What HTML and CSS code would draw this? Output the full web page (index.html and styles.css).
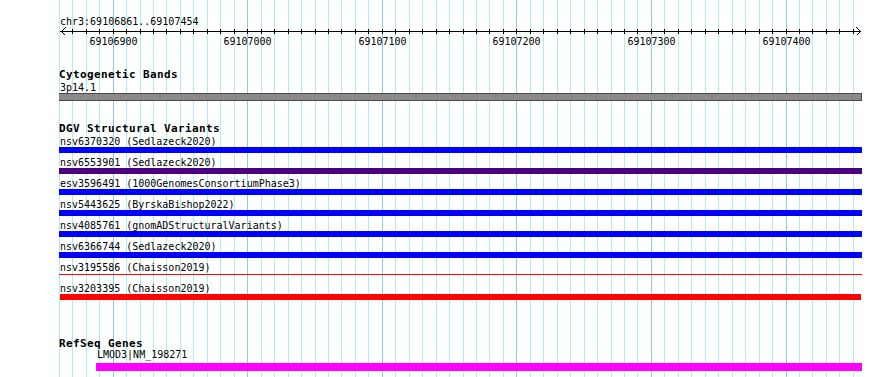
FILE: index.html
```html
<!DOCTYPE html>
<html>
<head>
<meta charset="utf-8">
<title>Genome view</title>
<link rel="stylesheet" href="styles.css">
</head>
<body>
<div class="view">
  <svg class="grid" width="890" height="377" viewBox="0 0 890 377" shape-rendering="crispEdges">
    <g class="minor">
      <rect x="59" y="0" width="1" height="377"/><rect x="72" y="0" width="1" height="377"/><rect x="86" y="0" width="1" height="377"/><rect x="99" y="0" width="1" height="377"/>
      <rect x="126" y="0" width="1" height="377"/><rect x="140" y="0" width="1" height="377"/><rect x="153" y="0" width="1" height="377"/><rect x="166" y="0" width="1" height="377"/><rect x="180" y="0" width="1" height="377"/><rect x="193" y="0" width="1" height="377"/><rect x="207" y="0" width="1" height="377"/><rect x="220" y="0" width="1" height="377"/><rect x="234" y="0" width="1" height="377"/>
      <rect x="261" y="0" width="1" height="377"/><rect x="274" y="0" width="1" height="377"/><rect x="288" y="0" width="1" height="377"/><rect x="301" y="0" width="1" height="377"/><rect x="315" y="0" width="1" height="377"/><rect x="328" y="0" width="1" height="377"/><rect x="341" y="0" width="1" height="377"/><rect x="355" y="0" width="1" height="377"/><rect x="368" y="0" width="1" height="377"/>
      <rect x="395" y="0" width="1" height="377"/><rect x="409" y="0" width="1" height="377"/><rect x="422" y="0" width="1" height="377"/><rect x="436" y="0" width="1" height="377"/><rect x="449" y="0" width="1" height="377"/><rect x="463" y="0" width="1" height="377"/><rect x="476" y="0" width="1" height="377"/><rect x="489" y="0" width="1" height="377"/><rect x="503" y="0" width="1" height="377"/>
      <rect x="530" y="0" width="1" height="377"/><rect x="543" y="0" width="1" height="377"/><rect x="557" y="0" width="1" height="377"/><rect x="570" y="0" width="1" height="377"/><rect x="584" y="0" width="1" height="377"/><rect x="597" y="0" width="1" height="377"/><rect x="611" y="0" width="1" height="377"/><rect x="624" y="0" width="1" height="377"/><rect x="637" y="0" width="1" height="377"/>
      <rect x="664" y="0" width="1" height="377"/><rect x="678" y="0" width="1" height="377"/><rect x="691" y="0" width="1" height="377"/><rect x="705" y="0" width="1" height="377"/><rect x="718" y="0" width="1" height="377"/><rect x="732" y="0" width="1" height="377"/><rect x="745" y="0" width="1" height="377"/><rect x="759" y="0" width="1" height="377"/><rect x="772" y="0" width="1" height="377"/>
      <rect x="799" y="0" width="1" height="377"/><rect x="812" y="0" width="1" height="377"/><rect x="826" y="0" width="1" height="377"/><rect x="839" y="0" width="1" height="377"/><rect x="853" y="0" width="1" height="377"/>
    </g>
    <g class="major">
      <rect x="113" y="0" width="1" height="377"/><rect x="247" y="0" width="1" height="377"/><rect x="382" y="0" width="1" height="377"/><rect x="516" y="0" width="1" height="377"/><rect x="651" y="0" width="1" height="377"/><rect x="786" y="0" width="1" height="377"/>
    </g>
  </svg>

  <svg class="ruler" width="890" height="50" viewBox="0 0 890 50" shape-rendering="crispEdges">
    <text class="ruler-loc" x="60" y="25">chr3:69106861..69107454</text>
    <rect class="axis" x="60" y="31" width="801" height="1"/>
    <g class="ticks">
      <rect x="72" y="29" width="1" height="5"/><rect x="86" y="29" width="1" height="5"/><rect x="99" y="29" width="1" height="5"/><rect x="113" y="29" width="1" height="5"/>
      <rect x="126" y="29" width="1" height="5"/><rect x="140" y="29" width="1" height="5"/><rect x="153" y="29" width="1" height="5"/><rect x="166" y="29" width="1" height="5"/><rect x="180" y="29" width="1" height="5"/><rect x="193" y="29" width="1" height="5"/><rect x="207" y="29" width="1" height="5"/><rect x="220" y="29" width="1" height="5"/><rect x="234" y="29" width="1" height="5"/><rect x="247" y="29" width="1" height="5"/>
      <rect x="261" y="29" width="1" height="5"/><rect x="274" y="29" width="1" height="5"/><rect x="288" y="29" width="1" height="5"/><rect x="301" y="29" width="1" height="5"/><rect x="315" y="29" width="1" height="5"/><rect x="328" y="29" width="1" height="5"/><rect x="341" y="29" width="1" height="5"/><rect x="355" y="29" width="1" height="5"/><rect x="368" y="29" width="1" height="5"/><rect x="382" y="29" width="1" height="5"/>
      <rect x="395" y="29" width="1" height="5"/><rect x="409" y="29" width="1" height="5"/><rect x="422" y="29" width="1" height="5"/><rect x="436" y="29" width="1" height="5"/><rect x="449" y="29" width="1" height="5"/><rect x="463" y="29" width="1" height="5"/><rect x="476" y="29" width="1" height="5"/><rect x="489" y="29" width="1" height="5"/><rect x="503" y="29" width="1" height="5"/><rect x="516" y="29" width="1" height="5"/>
      <rect x="530" y="29" width="1" height="5"/><rect x="543" y="29" width="1" height="5"/><rect x="557" y="29" width="1" height="5"/><rect x="570" y="29" width="1" height="5"/><rect x="584" y="29" width="1" height="5"/><rect x="597" y="29" width="1" height="5"/><rect x="611" y="29" width="1" height="5"/><rect x="624" y="29" width="1" height="5"/><rect x="637" y="29" width="1" height="5"/><rect x="651" y="29" width="1" height="5"/>
      <rect x="664" y="29" width="1" height="5"/><rect x="678" y="29" width="1" height="5"/><rect x="691" y="29" width="1" height="5"/><rect x="705" y="29" width="1" height="5"/><rect x="718" y="29" width="1" height="5"/><rect x="732" y="29" width="1" height="5"/><rect x="745" y="29" width="1" height="5"/><rect x="759" y="29" width="1" height="5"/><rect x="772" y="29" width="1" height="5"/><rect x="786" y="29" width="1" height="5"/>
      <rect x="799" y="29" width="1" height="5"/><rect x="812" y="29" width="1" height="5"/><rect x="826" y="29" width="1" height="5"/><rect x="839" y="29" width="1" height="5"/><rect x="853" y="29" width="1" height="5"/>
    </g>
    <polyline class="arrow" points="65.5,27.5 61.5,31.5 65.5,35.5"/>
    <polyline class="arrow" points="856.5,27.5 860.5,31.5 856.5,35.5"/>
    <g class="ruler-nums">
      <text x="113.5" y="45">69106900</text>
      <text x="247.5" y="45">69107000</text>
      <text x="382.5" y="45">69107100</text>
      <text x="516.5" y="45">69107200</text>
      <text x="651.5" y="45">69107300</text>
      <text x="786.5" y="45">69107400</text>
    </g>
  </svg>

  <section class="track track-cyto">
    <div class="track-title">Cytogenetic Bands</div>
    <div class="feat-label">3p14.1</div>
    <div class="band"></div>
  </section>

  <section class="track track-dgv">
    <div class="track-title">DGV Structural Variants</div>
    <div class="row"><div class="feat-label">nsv6370320 (Sedlazeck2020)</div><div class="bar bar-blue"></div></div>
    <div class="row"><div class="feat-label">nsv6553901 (Sedlazeck2020)</div><div class="bar bar-purple"></div></div>
    <div class="row"><div class="feat-label">esv3596491 (1000GenomesConsortiumPhase3)</div><div class="bar bar-blue"></div></div>
    <div class="row"><div class="feat-label">nsv5443625 (ByrskaBishop2022)</div><div class="bar bar-blue"></div></div>
    <div class="row"><div class="feat-label">nsv4085761 (gnomADStructuralVariants)</div><div class="bar bar-blue"></div></div>
    <div class="row"><div class="feat-label">nsv6366744 (Sedlazeck2020)</div><div class="bar bar-blue"></div></div>
    <div class="row"><div class="feat-label">nsv3195586 (Chaisson2019)</div><div class="bar bar-thin"></div></div>
    <div class="row"><div class="feat-label">nsv3203395 (Chaisson2019)</div><div class="bar bar-red"></div></div>
  </section>

  <section class="track track-refseq">
    <div class="track-title">RefSeq Genes</div>
    <div class="gene">
      <div class="feat-label gene-label">LMOD3|NM_198271</div>
      <div class="gene-bar"></div>
    </div>
  </section>
</div>
</body>
</html>
```

FILE: styles.css
```css
html, body {
  margin: 0;
  padding: 0;
  background: #ffffff;
}

.view {
  position: relative;
  width: 890px;
  height: 377px;
  overflow: hidden;
  background: #ffffff;
  font-family: "DejaVu Sans Mono", "Liberation Mono", monospace;
  color: #000000;
}

/* background grid (lies under all tracks) */
.grid {
  position: absolute;
  left: 0;
  top: 0;
  z-index: 0;
}
.grid .minor rect { fill: #afeeee; }
.grid .major rect { fill: #87ceeb; }

/* ruler */
.ruler {
  position: relative;
  z-index: 1;
  display: block;
}
.ruler text {
  font-family: "DejaVu Sans Mono", "Liberation Mono", monospace;
  font-size: 10px;
  fill: #000000;
}
.ruler-nums text { text-anchor: middle; }
.ruler .axis, .ruler .ticks rect { fill: #000000; }
.ruler .arrow {
  fill: none;
  stroke: #000000;
  stroke-width: 1;
}

/* tracks */
.track {
  position: relative;
  z-index: 1;
  display: flow-root;
  width: 803px;
  padding-left: 59px;
}

.track-title {
  font-weight: bold;
  font-size: 11px;
  line-height: 12px;
  height: 12px;
  letter-spacing: 0.38px;
  white-space: nowrap;
}

.feat-label {
  font-size: 10px;
  line-height: 11px;
  height: 11px;
  white-space: nowrap;
  padding-left: 1px;
}

.track-cyto { margin-top: 19px; }
.track-cyto .feat-label { margin-top: 1px; }

.band {
  height: 6px;
  width: 802px;
  background: #8a8a8a;
  border: 1px solid #4a4a4a;
  border-left: none;
}

.track-dgv { margin-top: 22px; }

.row {
  padding-top: 1px;
  padding-bottom: 3px;
}

.bar { height: 6px; }
.bar-blue { background: #0000ff; }
.bar-purple { background: #4b0082; }
.bar-red {
  background: #ff0000;
  margin: 0 1px;
}
.bar-thin {
  background: linear-gradient(#ff0000, #ff0000) 0 1px / 100% 1px no-repeat;
}

.track-refseq { margin-top: 35px; }

.gene {
  padding-left: 37px;
}

.gene-label {
  line-height: 10px;
  height: 10px;
}

.gene-bar {
  margin-top: 3px;
  height: 8px;
  background: #ff00ff;
}
```
